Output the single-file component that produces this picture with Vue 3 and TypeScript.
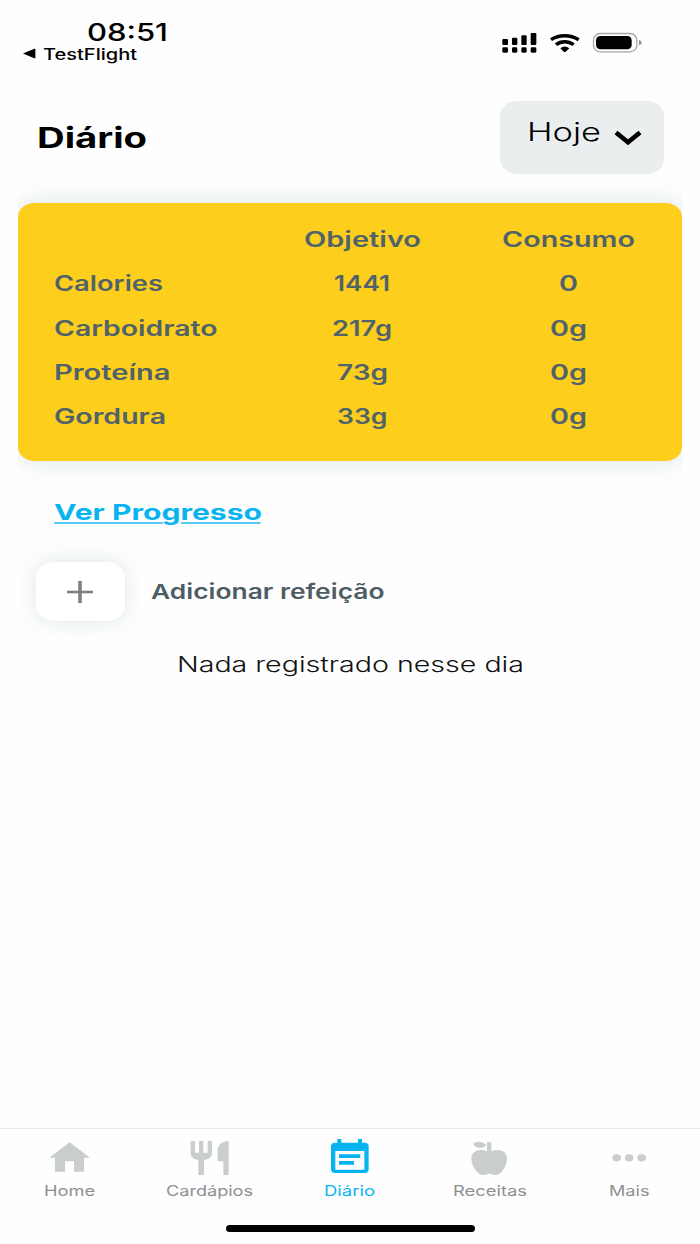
<script setup lang="ts">
import { h } from 'vue'

interface LabelProps {
  text: string
  width: number
  size: number
  height: number
  baseline: number
}

// Text set to an exact advance width, so the wide letterforms stay consistent.
const WideText = (p: LabelProps) =>
  h('svg', { width: p.width, height: p.height, overflow: 'visible' }, [
    h(
      'text',
      {
        x: 0,
        y: p.baseline,
        textLength: p.width,
        lengthAdjust: 'spacingAndGlyphs',
        'font-size': p.size,
        fill: 'currentColor',
      },
      p.text,
    ),
  ])
WideText.props = ['text', 'width', 'size', 'height', 'baseline']

interface Cell {
  text: string
  width: number
}

const rows: Cell[][] = [
  [{ text: '', width: 0 }, { text: 'Objetivo', width: 117 }, { text: 'Consumo', width: 133 }],
  [{ text: 'Calories', width: 109 }, { text: '1441', width: 56 }, { text: '0', width: 19 }],
  [{ text: 'Carboidrato', width: 163.5 }, { text: '217g', width: 60 }, { text: '0g', width: 37 }],
  [{ text: 'Proteína', width: 116.5 }, { text: '73g', width: 51 }, { text: '0g', width: 37 }],
  [{ text: 'Gordura', width: 112 }, { text: '33g', width: 50.5 }, { text: '0g', width: 37 }],
]

interface Tab {
  id: string
  label: string
  width: number
  view: string
}

const tabs: Tab[] = [
  { id: 'home', label: 'Home', width: 51, view: '0 57 420 162' },
  { id: 'menus', label: 'Cardápios', width: 87, view: '420 57 420 162' },
  { id: 'diary', label: 'Diário', width: 51, view: '0 57 420 162' },
  { id: 'recipes', label: 'Receitas', width: 74, view: '420 57 420 162' },
  { id: 'more', label: 'Mais', width: 40.5, view: '120 57 420 162' },
]
</script>

<template>
  <div class="screen">
    <header class="status">
      <div class="clock">
        <WideText class="time" text="08:51" :width="81" :size="24.5" :height="44" :baseline="40.7" />
        <div class="back">
          <svg class="back-arrow" width="13" height="11" viewBox="0 0 13 11">
            <path d="M0 5.500 11.200 0.800Q12.400 0.400 12.400 1.600V9.400Q12.400 10.600 11.200 10.200Z" />
          </svg>
          <WideText class="app-name" text="TestFlight" :width="94" :size="15.4" :height="20" :baseline="15.6" />
        </div>
      </div>
      <svg class="indicators" width="160" height="45" viewBox="0 0 480 135">
        <g>
          <rect x="37" y="57" width="17" height="18" rx="3" />
          <rect x="66" y="53" width="16" height="22" rx="3" />
          <rect x="94" y="46" width="16" height="29" rx="3" />
          <rect x="122" y="39" width="17" height="36" rx="3" />
          <rect x="37" y="82" width="17" height="16" rx="4" />
          <rect x="66" y="82" width="16" height="16" rx="4" />
          <rect x="94" y="82" width="16" height="16" rx="4" />
          <rect x="122" y="82" width="17" height="16" rx="4" />
        </g>
        <g fill="none" stroke="#000" stroke-width="10.5">
          <path d="M183 59Q201 47 224 47T266 59" />
          <path d="M198 74Q209 65 224 65T251 74" />
        </g>
        <path d="M211 85Q224 74 238 85L227 95Q224 97.500 221 95Z" />
        <rect x="310.500" y="40.500" width="130" height="55" rx="20" fill="none" stroke="#a3a6a7" stroke-width="4" />
        <rect x="318" y="48" width="107" height="40" rx="13" />
        <path d="M447 60Q455 62 455 68T447 76Z" fill="#8f9394" />
      </svg>
    </header>

    <div class="heading">
      <WideText class="title" text="Diário" :width="110" :size="28" :height="40" :baseline="30.700" />
      <button class="day" type="button">
        <WideText text="Hoje" :width="74" :size="25.5" :height="36" :baseline="27.400" />
        <svg class="chevron" width="28" height="16" viewBox="0 0 28 16">
          <path d="M2 2.500 14 12.300 26 2.500" />
        </svg>
      </button>
    </div>

    <div class="card-clip">
      <section class="card">
        <div v-for="(row, r) in rows" :key="r" class="row">
          <div v-for="(cell, c) in row" :key="c" class="cell">
            <WideText v-if="cell.text" :text="cell.text" :width="cell.width" :size="21" :height="44.25" :baseline="30.600" />
          </div>
        </div>
      </section>
    </div>

    <a class="progress">
      <WideText text="Ver Progresso" :width="208" :size="22" :height="30" :baseline="20.300" />
      <svg class="underline" width="207" height="2" viewBox="0 0 207 2">
        <path d="M0 1H109M127 1H206.500" />
      </svg>
    </a>

    <div class="add">
      <button class="plus" type="button">
        <svg width="26" height="22" viewBox="0 0 26 22">
          <path d="M0 11H26" stroke-width="2.600" />
          <path d="M13 0V22" stroke-width="3.600" />
        </svg>
      </button>
      <WideText class="add-label" text="Adicionar refeição" :width="233.5" :size="20.5" :height="30" :baseline="21.700" />
    </div>

    <div class="empty">
      <WideText text="Nada registrado nesse dia" :width="347" :size="20.8" :height="30" :baseline="21.700" />
    </div>

    <nav class="tabs">
      <div v-for="tab in tabs" :key="tab.id" class="tab" :class="{ active: tab.id === 'diary' }">
        <svg class="icon" width="140" height="54" :viewBox="tab.view">
          <path v-if="tab.id === 'home'" d="M209 97 270 143H252V185H222V154H195V185H165V143H148Z" />
          <g v-else-if="tab.id === 'menus'">
            <path d="M572 93H585V128H597V93H610V128H623V93H636V129C636 141 626 149 612 150V195H595V150C581 149 572 141 572 129Z" />
            <path d="M686 93V195H670V154H653V121C653 106 665 94 686 93Z" />
          </g>
          <path
            v-else-if="tab.id === 'diary'"
            fill-rule="evenodd"
            d="M172 87H184V98H234V87H246V98H254Q266 98 266 109V178Q266 189 254 189H165Q153 189 153 178V109Q153 98 165 98H172ZM166 123V179H253V123ZM177 133H241V144H177ZM177 153H222V164H177Z"
          />
          <g v-else-if="tab.id === 'recipes'">
            <path d="M579 102C587 93 607 92 619 106C608 117 589 117 579 102Z" />
            <path d="M621 97H634V124C654 115 681 121 681 145C681 169 663 195 648 195C639 195 636 191 628 191C620 191 617 195 608 195C593 195 574 169 574 145C574 121 600 115 621 124Z" />
          </g>
          <g v-else>
            <ellipse cx="290" cy="143.500" rx="13" ry="11" />
            <ellipse cx="327.500" cy="143.500" rx="13" ry="11" />
            <ellipse cx="365" cy="143.500" rx="13" ry="11" />
          </g>
        </svg>
        <WideText class="tab-label" :text="tab.label" :width="tab.width" :size="14.3" :height="20" :baseline="13.300" />
      </div>
    </nav>
    <div class="home-bar"></div>
  </div>
</template>

<style>
body {
  background: #fefefe;
}
</style>

<style scoped>
.screen {
  width: 700px;
  height: 1244px;
  display: flex;
  flex-direction: column;
  overflow: hidden;
  background: #fefefe;
  color: #000;
  font-family: Inter, "Liberation Sans", sans-serif;
}
svg {
  display: block;
  flex: none;
}
button {
  border: 0;
  padding: 0;
  font: inherit;
  color: inherit;
}
.status {
  display: flex;
  justify-content: space-between;
  height: 100px;
  padding: 0 50px 0 23px;
}
.time {
  margin-left: 64px;
  font-weight: 550;
}
.back {
  display: flex;
}
.back-arrow {
  margin: 4px 7px 0 0;
}
.app-name {
  font-weight: 450;
}
.indicators {
  margin-top: 20px;
}
.heading {
  display: flex;
  justify-content: space-between;
  height: 103px;
  padding: 0 36px 0 36.5px;
}
.title {
  margin-top: 17px;
  font-weight: 700;
}
.day {
  display: flex;
  width: 164px;
  height: 73px;
  margin-top: 1px;
  padding: 13px 0 0 27px;
  border-radius: 17px / 15px;
  background: #eaeeef;
  font-weight: 300;
}
.chevron {
  margin: 16px 0 0 13px;
}
.chevron path {
  fill: none;
  stroke: #000;
  stroke-width: 4.6;
}
.card-clip {
  flex: none;
  padding: 0 18px;
  clip-path: inset(-30px 18px);
}
.card {
  height: 258px;
  box-sizing: border-box;
  padding: 13px 10px 0 35.5px;
  border-radius: 17px / 14px;
  background: #fdce1b;
  box-shadow: 0 0 22px rgba(20, 80, 95, 0.16);
  color: #50626a;
  font-weight: 570;
}
.row {
  display: grid;
  grid-template-columns: 205px 207px 206.5px;
  height: 44.25px;
}
.cell {
  display: flex;
  justify-content: center;
}
.cell:first-child {
  justify-content: flex-start;
}
.progress {
  display: block;
  flex: none;
  height: 101px;
  box-sizing: border-box;
  padding: 39px 0 0 53.5px;
  color: #08b4f0;
  font-weight: 700;
}
.underline {
  margin-top: -8px;
}
.underline path {
  stroke: #59c9f5;
  stroke-width: 2;
}
.add {
  display: flex;
  flex: none;
  height: 59px;
  padding-left: 36px;
}
.plus {
  display: flex;
  align-items: center;
  justify-content: center;
  width: 89px;
  height: 59px;
  padding-right: 1px;
  box-sizing: border-box;
  border-radius: 18px / 15px;
  background: #fff;
  box-shadow: 0 0 20px rgba(20, 80, 95, 0.14);
}
.plus path {
  stroke: #7d8182;
}
.add-label {
  margin: 15px 0 0 26px;
  color: #4c5d64;
  font-weight: 570;
}
.empty {
  display: flex;
  justify-content: center;
  padding-top: 29px;
  color: #111;
  font-weight: 350;
}
.tabs {
  display: grid;
  grid-template-columns: repeat(5, 140px);
  height: 96px;
  margin-top: auto;
  border-top: 1px solid #e6eaeb;
}
.tab {
  display: flex;
  flex-direction: column;
  align-items: center;
  color: #8c9093;
}
.icon {
  fill: #c9cdce;
}
.active {
  color: #10b6f2;
}
.active .icon {
  fill: #08b4f0;
}
.tab-label {
  margin-right: 1px;
}
.home-bar {
  flex: none;
  width: 249px;
  height: 7px;
  margin: 0 auto 12px;
  border-radius: 4px;
  background: #000;
}
</style>
